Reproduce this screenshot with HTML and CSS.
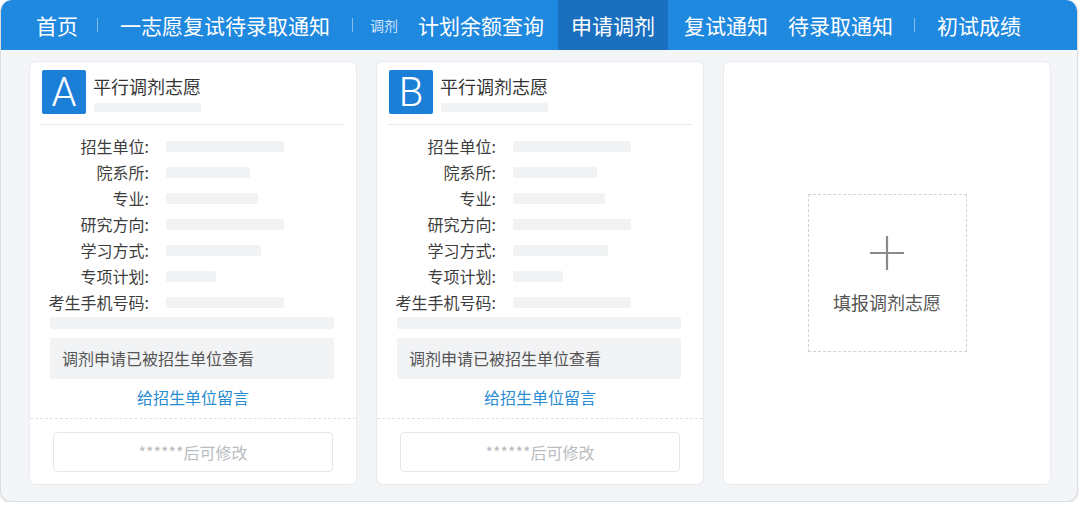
FILE: index.html
```html
<!DOCTYPE html>
<html lang="zh-CN">
<head>
<meta charset="utf-8">
<title>申请调剂</title>
<link rel="stylesheet" href="styles.css">
</head>
<body>
<div class="frame">
  <nav class="nav">
    <a class="nav-item">首页</a>
    <span class="sep"></span>
    <a class="nav-item">一志愿复试待录取通知</a>
    <span class="sep sep-b"></span>
    <span class="nav-tag">调剂</span>
    <a class="nav-item quota">计划余额查询</a>
    <a class="nav-item active">申请调剂</a>
    <a class="nav-item after-active">复试通知</a>
    <a class="nav-item pending">待录取通知</a>
    <span class="sep sep-c"></span>
    <a class="nav-item">初试成绩</a>
  </nav>
  <main class="board">
    <section class="card">
      <header class="card-head">
        <div class="badge">A</div>
        <div class="head-text">
          <div class="title">平行调剂志愿</div>
          <div class="blur blur-sub"></div>
        </div>
      </header>
      <div class="divider"></div>
      <div class="rows">
        <div class="label">招生单位:</div><div class="blur v" style="width:118px"></div>
        <div class="label">院系所:</div><div class="blur v" style="width:84px"></div>
        <div class="label">专业:</div><div class="blur v" style="width:92px"></div>
        <div class="label">研究方向:</div><div class="blur v" style="width:118px"></div>
        <div class="label">学习方式:</div><div class="blur v" style="width:95px"></div>
        <div class="label">专项计划:</div><div class="blur v" style="width:50px"></div>
        <div class="label">考生手机号码:</div><div class="blur v" style="width:118px"></div>
      </div>
      <div class="blur wide"></div>
      <div class="status">调剂申请已被招生单位查看</div>
      <a class="msg-link">给招生单位留言</a>
      <div class="dash"></div>
      <div class="btn-disabled">******后可修改</div>
    </section>
    <section class="card">
      <header class="card-head">
        <div class="badge">B</div>
        <div class="head-text">
          <div class="title">平行调剂志愿</div>
          <div class="blur blur-sub"></div>
        </div>
      </header>
      <div class="divider"></div>
      <div class="rows">
        <div class="label">招生单位:</div><div class="blur v" style="width:118px"></div>
        <div class="label">院系所:</div><div class="blur v" style="width:84px"></div>
        <div class="label">专业:</div><div class="blur v" style="width:92px"></div>
        <div class="label">研究方向:</div><div class="blur v" style="width:118px"></div>
        <div class="label">学习方式:</div><div class="blur v" style="width:95px"></div>
        <div class="label">专项计划:</div><div class="blur v" style="width:50px"></div>
        <div class="label">考生手机号码:</div><div class="blur v" style="width:118px"></div>
      </div>
      <div class="blur wide"></div>
      <div class="status">调剂申请已被招生单位查看</div>
      <a class="msg-link">给招生单位留言</a>
      <div class="dash"></div>
      <div class="btn-disabled">******后可修改</div>
    </section>
    <section class="card card-add">
      <div class="add-box">
        <svg class="plus" width="36" height="36" viewBox="0 0 36 36" aria-hidden="true">
          <line x1="18" y1="1" x2="18" y2="35" stroke="#8a8a8a" stroke-width="2.2"/>
          <line x1="1" y1="18" x2="35" y2="18" stroke="#8a8a8a" stroke-width="2.2"/>
        </svg>
        <div class="add-text">填报调剂志愿</div>
      </div>
    </section>
  </main>
</div>
</body>
</html>
```
FILE: styles.css
```css
html, body {
  margin: 0;
  padding: 0;
  background: #ffffff;
}
body {
  font-family: "Noto Sans CJK SC", "Noto Sans", sans-serif;
  color: #333;
}
.frame {
  width: 1078px;
  height: 502px;
  box-sizing: border-box;
  border: 1px solid #d9dee3;
  border-top: none;
  border-radius: 11px;
  overflow: hidden;
  background: #f3f5f7;
  box-shadow: 0 1px 2px rgba(0,0,0,0.12);
}
.nav {
  height: 50px;
  background: #1f88df;
  display: flex;
  align-items: stretch;
  padding-left: 35px;
  border-radius: 11px 11px 0 0;
}
.nav-item {
  display: flex;
  align-items: center;
  font-size: 21px;
  color: #ffffff;
  white-space: nowrap;
}
.nav-item.quota {
  margin-left: 20px;
}
.nav-item.active {
  background: #1a6fbf;
  padding: 0 13px;
  margin-left: 14px;
}
.nav-item.after-active {
  margin-left: 16px;
}
.nav-item.pending {
  margin-left: 20px;
}
.nav-tag {
  display: flex;
  align-items: center;
  font-size: 14px;
  color: rgba(255,255,255,0.82);
}
.sep {
  align-self: center;
  width: 1px;
  height: 14px;
  background: rgba(255,255,255,0.45);
  margin: 0 22px 0 19px;
}
.sep.sep-b {
  margin: 0 17px 0 22px;
}
.sep.sep-c {
  margin: 0 22px 0 21px;
}
.board {
  display: flex;
  gap: 21px;
  padding: 12px 0 0 29px;
}
.card {
  width: 326px;
  height: 422px;
  background: #ffffff;
  border-radius: 6px;
  box-shadow: 0 0 0 1px #e8ecf0;
  display: flex;
  flex-direction: column;
}
.card-head {
  display: flex;
  gap: 7px;
  padding: 8px 0 0 12px;
}
.badge {
  width: 44px;
  height: 44px;
  background: #1b7fd7;
  border-radius: 2px;
  color: #ffffff;
  font-family: Roboto, "Liberation Sans", sans-serif;
  font-weight: 300;
  font-size: 40px;
  line-height: 46px;
  text-align: center;
}
.head-text {
  display: flex;
  flex-direction: column;
}
.title {
  font-size: 18px;
  line-height: 24px;
  margin-top: 4px;
  color: #333;
}
.blur {
  background: #f0f2f4;
  border-radius: 2px;
}
.blur-sub {
  width: 107px;
  height: 9px;
  margin: 5px 0 0 1px;
}
.divider {
  height: 1px;
  background: #e6e9ec;
  margin: 10px 11px 0;
}
.rows {
  display: grid;
  grid-template-columns: 102px 1fr;
  grid-auto-rows: 26px;
  column-gap: 17px;
  align-items: center;
  margin: 8px 0 0 17px;
}
.label {
  text-align: right;
  font-size: 16px;
  line-height: 26px;
  color: #3d3d3d;
  white-space: nowrap;
}
.v {
  height: 11px;
}
.wide {
  width: 284px;
  height: 12px;
  margin: 2px 0 0 20px;
}
.status {
  width: 284px;
  height: 41px;
  box-sizing: border-box;
  margin: 9px 0 0 20px;
  padding-left: 12px;
  background: #f2f3f5;
  border-radius: 2px;
  font-size: 16px;
  line-height: 41px;
  color: #555;
}
.msg-link {
  display: block;
  margin-top: 6px;
  text-align: center;
  font-size: 16px;
  line-height: 24px;
  color: #2a8cd3;
}
.dash {
  margin-top: 9px;
  border-top: 1px dashed #dde0e4;
}
.btn-disabled {
  width: 280px;
  height: 40px;
  box-sizing: border-box;
  margin: 13px 0 0 23px;
  border: 1px solid #e4e6e9;
  border-radius: 4px;
  text-align: center;
  font-size: 16px;
  line-height: 38px;
  color: #b9bcc0;
}
.card-add {
  align-items: center;
  justify-content: center;
}
.add-box {
  width: 159px;
  height: 158px;
  box-sizing: border-box;
  border: 1px dashed #cfd3d8;
  display: flex;
  flex-direction: column;
  align-items: center;
}
.plus {
  margin-top: 40px;
}
.add-text {
  margin-top: 19px;
  font-size: 18px;
  line-height: 24px;
  color: #555;
}
```
